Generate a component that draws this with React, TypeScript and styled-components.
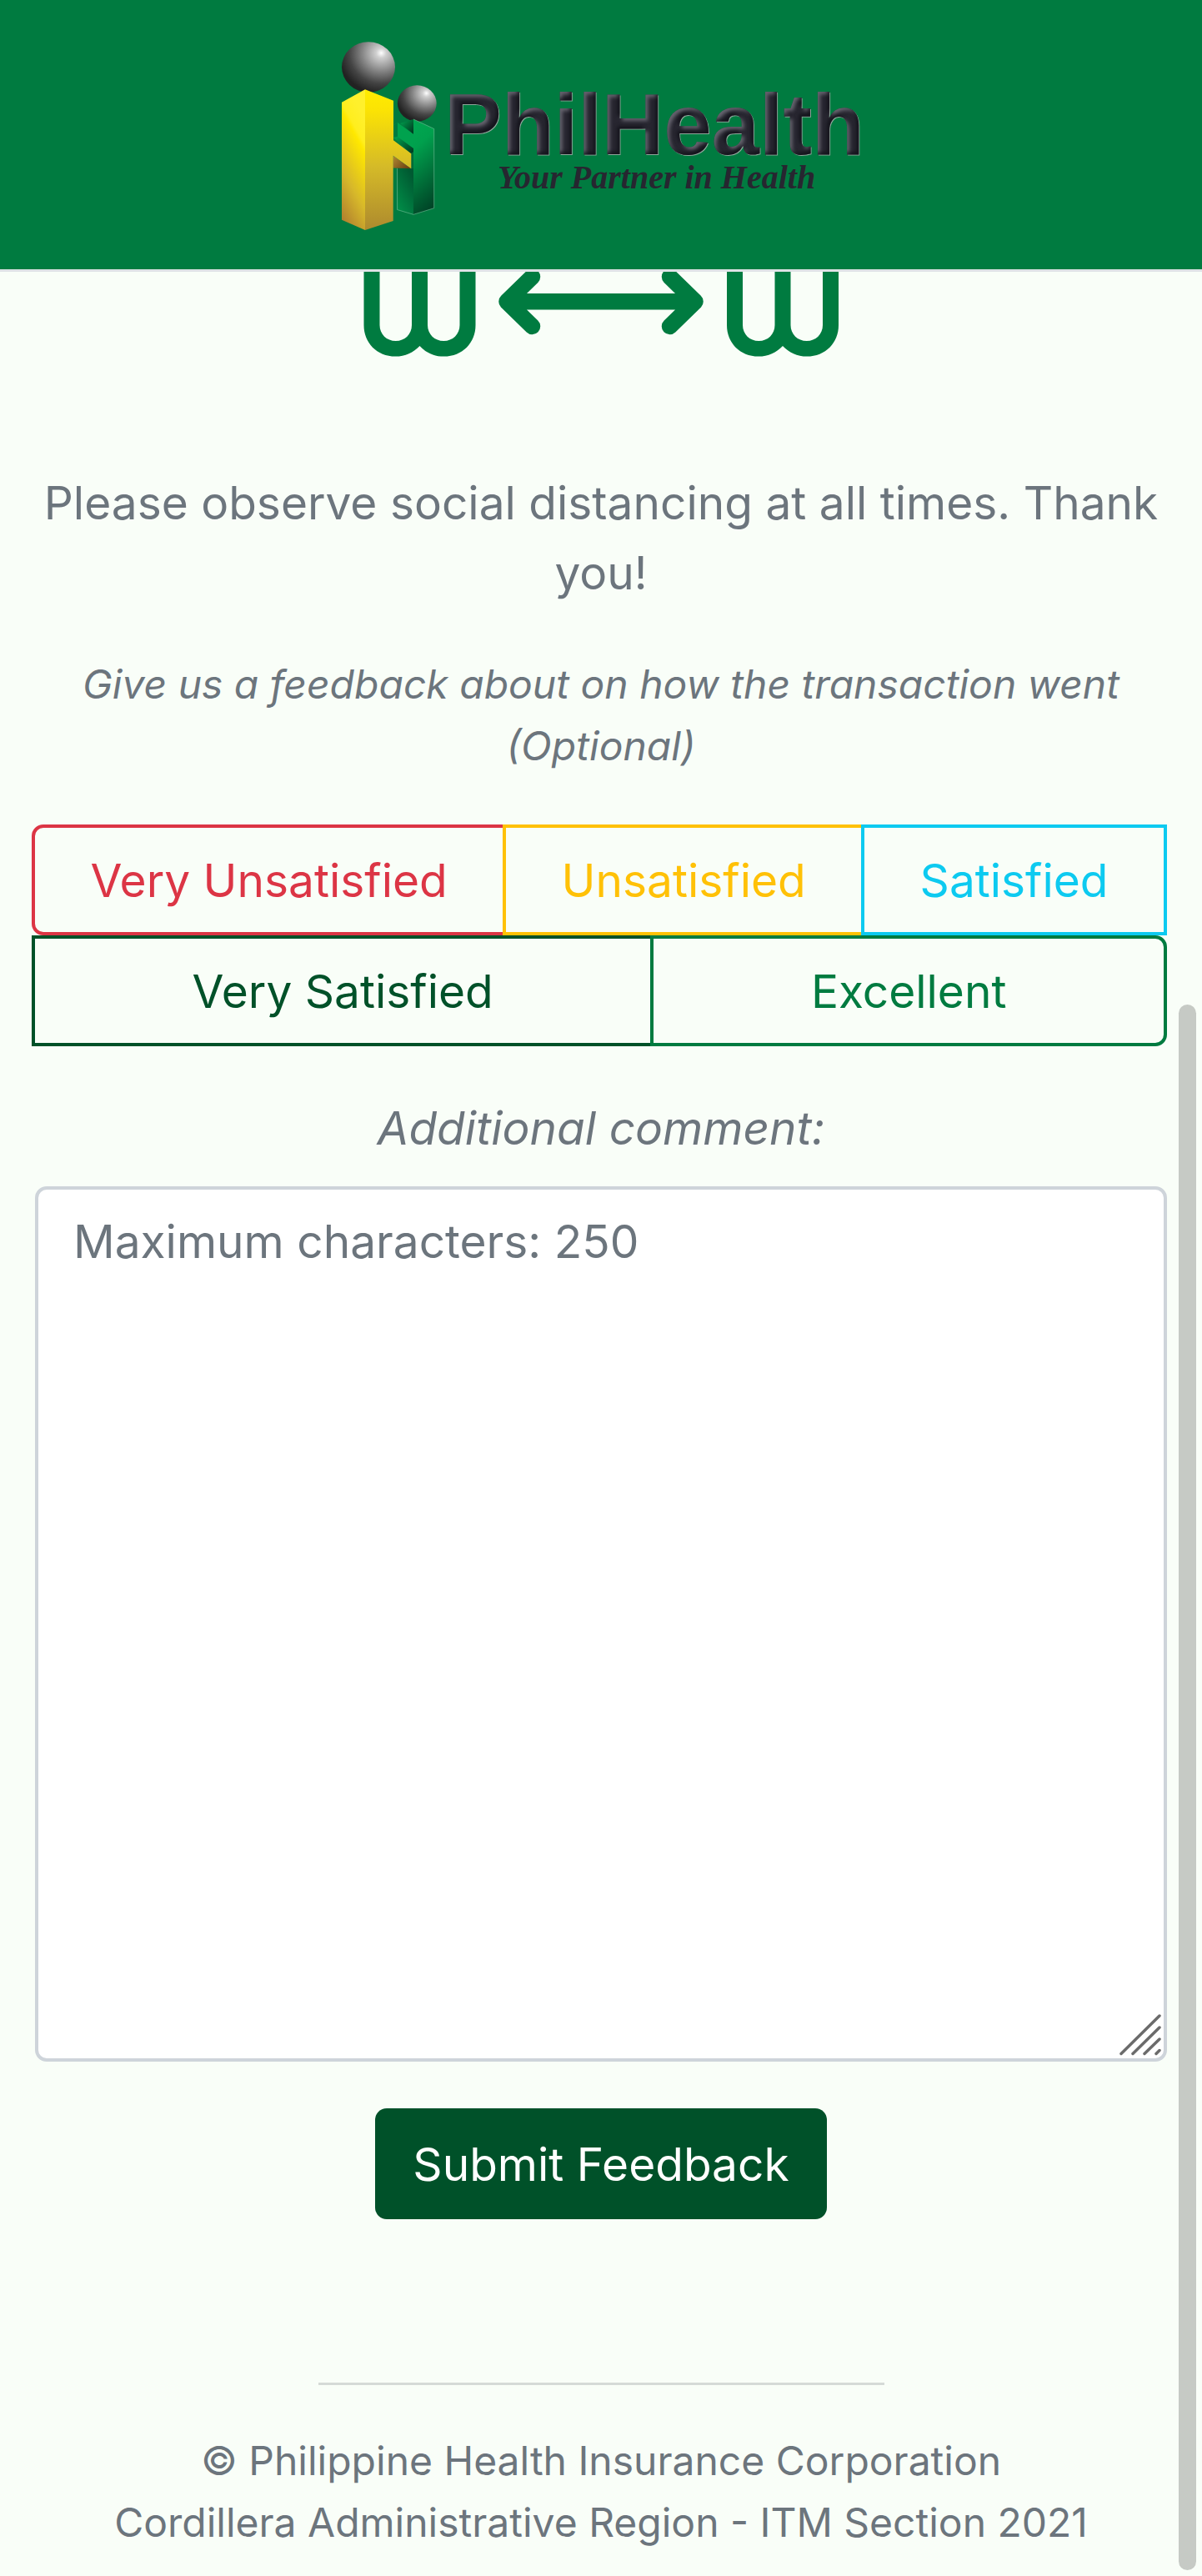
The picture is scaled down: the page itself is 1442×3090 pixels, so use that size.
import React, { useState } from "react";
import styled, { createGlobalStyle } from "styled-components";

const color = {
  brand: "#007b40",
  brandDark: "#005129",
  page: "#f9fef8",
  text: "#6c757d",
  line: "#dee2e6",
  field: "#ced4da",
};

const sans = '"Inter", "Roboto", sans-serif';

const GlobalStyle = createGlobalStyle`
  *, *::before, *::after { box-sizing: border-box; }
  body {
    margin: 0;
    background: ${color.page};
    color: ${color.text};
    font-family: ${sans};
    font-size: 55px;
    line-height: 84px;
  }
`;

const Page = styled.div`
  position: relative;
  display: flex;
  flex-direction: column;
  min-height: 100vh;
  overflow-x: hidden;
`;

const Header = styled.header`
  display: flex;
  justify-content: center;
  padding: 48px 0 45px;
  background: ${color.brand};
  border-bottom: 3px solid ${color.line};
`;

const LogoSvg = styled.svg`
  display: block;
  width: 632px;
  max-width: 100%;
  height: auto;
`;

const LogoName = styled.text`
  font: bold 103px "Liberation Sans", Arial, sans-serif;
`;

const LogoTagline = styled.text`
  font: italic bold 40px "Liberation Serif", "Times New Roman", serif;
`;

const Main = styled.main`
  display: flex;
  flex-direction: column;
  padding: 0 42px;
  text-align: center;
`;

const DistanceSvg = styled.svg`
  display: block;
  align-self: center;
  width: 572px;
  max-width: 100%;
  height: auto;
  margin-bottom: 132px;
`;

const Notice = styled.p`
  margin: 0 -14px 55px;
`;

const Prompt = styled.p`
  margin: 0 0 57px;
  font-size: 48px;
  font-style: italic;
  line-height: 74px;
`;

const RatingGroup = styled.div`
  display: flex;
  flex-wrap: wrap;
  margin-bottom: 56px;
`;

const RatingButton = styled.button<{ $tone: string; $corners?: string }>`
  flex: 1 1 auto;
  height: 133px;
  margin: 0 0 0 -4px;
  padding: 0 42px;
  border: 4px solid ${(p) => p.$tone};
  border-radius: ${(p) => p.$corners ?? "0"};
  background: transparent;
  color: ${(p) => p.$tone};
  font: inherit;
  cursor: pointer;
`;

const CommentLabel = styled.label`
  margin-bottom: 28px;
  font-style: italic;
`;

const CommentField = styled.div`
  position: relative;
  display: flex;
  margin-bottom: 56px;
`;

const CommentBox = styled.textarea`
  flex: 1;
  min-width: 0;
  height: 1050px;
  padding: 20px 42px;
  border: 4px solid ${color.field};
  border-radius: 14px;
  background: #fff;
  color: #212529;
  font: inherit;
  resize: none;

  &::placeholder {
    color: ${color.text};
    opacity: 1;
  }
`;

const Grip = styled.svg`
  position: absolute;
  right: 7px;
  bottom: 7px;
  width: 50px;
  height: 50px;
  pointer-events: none;
`;

const SubmitButton = styled.button`
  align-self: center;
  height: 133px;
  padding: 0 45px;
  border: 0;
  border-radius: 14px;
  background: ${color.brandDark};
  color: #fff;
  font: inherit;
  cursor: pointer;
`;

const Footer = styled.footer`
  display: flex;
  flex-direction: column;
  align-items: center;
  padding: 196px 42px 25px;
  font-size: 48px;
  line-height: 74px;
  text-align: center;
`;

const Rule = styled.hr`
  width: 50%;
  height: 3px;
  margin: 0 0 54px;
  border: 0;
  background: #d5dad7;
`;

const ScrollThumb = styled.div`
  position: absolute;
  top: 39%;
  right: 7px;
  bottom: 7px;
  width: 21px;
  border-radius: 11px;
  background: #c6cac5;
`;

function Logo() {
  return (
    <LogoSvg viewBox="405 48 632 230" role="img" aria-label="PhilHealth, Your Partner in Health">
      <defs>
        <radialGradient id="ball" cx="0.74" cy="0.22" r="0.8">
          <stop offset="0" stopColor="#fff" />
          <stop offset="0.12" stopColor="#cfcfcf" />
          <stop offset="0.45" stopColor="#858585" />
          <stop offset="0.75" stopColor="#444" />
          <stop offset="1" stopColor="#222" />
        </radialGradient>
        <linearGradient id="goldLeft" x1="0.3" y1="0" x2="0" y2="1">
          <stop offset="0" stopColor="#fff02c" />
          <stop offset="0.17" stopColor="#ffee1e" />
          <stop offset="0.22" stopColor="#ffe800" />
          <stop offset="0.6" stopColor="#d7b82a" />
          <stop offset="1" stopColor="#a87430" />
        </linearGradient>
        <linearGradient id="goldRight" x1="0" y1="0" x2="0" y2="1">
          <stop offset="0" stopColor="#ffec00" />
          <stop offset="0.15" stopColor="#fbe304" />
          <stop offset="0.55" stopColor="#d5ba28" />
          <stop offset="1" stopColor="#ad8a2e" />
        </linearGradient>
        <linearGradient id="goldUnder" x1="0" y1="0" x2="1" y2="0.6">
          <stop offset="0" stopColor="#b08a34" />
          <stop offset="1" stopColor="#6e4314" />
        </linearGradient>
        <linearGradient id="leafRight" x1="0.3" y1="0" x2="0.5" y2="1">
          <stop offset="0" stopColor="#00a650" />
          <stop offset="0.25" stopColor="#00a04d" />
          <stop offset="1" stopColor="#004527" />
        </linearGradient>
        <linearGradient id="leafLeft" x1="0" y1="1" x2="0.6" y2="0">
          <stop offset="0" stopColor="#00924a" />
          <stop offset="1" stopColor="#005a32" />
        </linearGradient>
        <linearGradient id="leafFold" x1="0" y1="0" x2="1" y2="1">
          <stop offset="0" stopColor="#00a650" />
          <stop offset="0.9" stopColor="#003d22" />
        </linearGradient>
        <filter id="bevel" x="-5%" y="-10%" width="110%" height="120%" colorInterpolationFilters="sRGB">
          <feGaussianBlur in="SourceAlpha" stdDeviation="2" result="soft" />
          <feOffset in="soft" dx="3" dy="3" result="lowerRight" />
          <feComposite in="SourceAlpha" in2="lowerRight" operator="out" result="litEdge" />
          <feFlood floodColor="#9a98a4" floodOpacity="0.55" />
          <feComposite in2="litEdge" operator="in" result="light" />
          <feOffset in="soft" dx="-3" dy="-3" result="upperLeft" />
          <feComposite in="SourceAlpha" in2="upperLeft" operator="out" result="darkEdge" />
          <feFlood floodColor="#0c0b12" floodOpacity="0.7" />
          <feComposite in2="darkEdge" operator="in" result="dark" />
          <feOffset in="SourceAlpha" dx="0.6" dy="0.8" result="rimShape" />
          <feFlood floodColor="#8fa79b" />
          <feComposite in2="rimShape" operator="in" result="rim" />
          <feMerge>
            <feMergeNode in="rim" />
            <feMergeNode in="SourceGraphic" />
            <feMergeNode in="light" />
            <feMergeNode in="dark" />
          </feMerge>
        </filter>
      </defs>

      <ellipse cx="442" cy="80.5" rx="32" ry="30.3" fill="url(#ball)" />
      <ellipse cx="500.3" cy="124" rx="23.4" ry="21.7" fill="url(#ball)" />

      <path d="M476.5 200H496V257.3L476.5 251.5Z" fill="url(#leafLeft)" />
      <path d="M496 143L520.7 154.5V249.7L496 257.3Z" fill="url(#leafRight)" />
      <path d="M480 148L496 143V161Z" fill="url(#leafFold)" />
      <path d="M472 150L477 147L496 161V179L472 165Z" fill="#00a24e" />
      <path d="M472 150L477 147V164L472 166Z" fill="#007c40" />
      <path d="M472 165L477 164L496 178V186L493 184.5Z" fill="url(#leafFold)" />
      <path d="M493 184L496 182V202H493Z" fill="#006b38" />
      <path
        d="M476.5 202V251.5L496 257.3L520.7 249.7V154.5L496 143"
        fill="none"
        stroke="#7fc4a0"
        strokeWidth="0.7"
        strokeOpacity="0.8"
      />

      <path d="M410 122.7L438 107.3V276L410 263.7Z" fill="url(#goldLeft)" />
      <path d="M471.5 186.7L493.3 202.3L471.5 201.6Z" fill="url(#goldUnder)" />
      <path
        d="M438 107.3L472 120.7V168.3L493.3 184.3V202.3L471.7 186.7V265L438 276Z"
        fill="url(#goldRight)"
      />

      <LogoName x="533" y="184.5" fill="#272630" filter="url(#bevel)">
        PhilHealth
      </LogoName>
      <LogoTagline x="597" y="225.5" fill="#272630">
        Your Partner in Health
      </LogoTagline>
    </LogoSvg>
  );
}

function Legs() {
  return (
    <path
      d="M436.5 326V390C436.5 411 452 427.6 474.5 427.6C486 427.6 496 423 503.5 415C511 423 521 427.6 532.5 427.6C555 427.6 570.5 411 570.5 390V326H551.5V390C551.5 401 543 409 532.3 409C521.5 409 513 401 513 390V326H494V390C494 401 485.5 409 474.8 409C464 409 455.5 401 455.5 390V326Z"
      fill={color.brand}
    />
  );
}

function DistanceIcon() {
  return (
    <DistanceSvg viewBox="435 326 572 103" role="img" aria-label="Keep your distance">
      <Legs />
      <g transform="translate(435.5 0)">
        <Legs />
      </g>
      <path
        d="M638.5 332L608 361.8L638.5 391.5M803.5 332L834 361.8L803.5 391.5M608 361.8H834"
        fill="none"
        stroke={color.brand}
        strokeWidth="19.5"
        strokeLinecap="round"
        strokeLinejoin="round"
      />
    </DistanceSvg>
  );
}

const ratings = [
  { label: "Very Unsatisfied", tone: "#dc3545", corners: "14px 0 0 14px" },
  { label: "Unsatisfied", tone: "#ffc107" },
  { label: "Satisfied", tone: "#0dcaf0" },
  { label: "Very Satisfied", tone: color.brandDark },
  { label: "Excellent", tone: color.brand, corners: "0 14px 14px 0" },
];

export default function App() {
  const [comment, setComment] = useState("");

  return (
    <Page>
      <GlobalStyle />
      <Header>
        <Logo />
      </Header>
      <Main>
        <DistanceIcon />
        <Notice>Please observe social distancing at all times. Thank you!</Notice>
        <Prompt>Give us a feedback about on how the transaction went (Optional)</Prompt>
        <RatingGroup role="group" aria-label="Rating">
          {ratings.map((r) => (
            <RatingButton key={r.label} type="button" $tone={r.tone} $corners={r.corners}>
              {r.label}
            </RatingButton>
          ))}
        </RatingGroup>
        <CommentLabel htmlFor="comment">Additional comment:</CommentLabel>
        <CommentField>
          <CommentBox
            id="comment"
            maxLength={250}
            placeholder="Maximum characters: 250"
            value={comment}
            onChange={(e) => setComment(e.target.value)}
          />
          <Grip viewBox="0 0 50 50" aria-hidden="true">
            <path
              d="M2 47.5L48 2M16 47.5L48 16M30 47.5L48 30M44 47.5L48 43.5"
              stroke="#6b6b6b"
              strokeWidth="3.5"
              strokeLinecap="round"
            />
          </Grip>
        </CommentField>
        <SubmitButton type="submit">Submit Feedback</SubmitButton>
      </Main>
      <Footer>
        <Rule />
        <span>© Philippine Health Insurance Corporation</span>
        <span>Cordillera Administrative Region - ITM Section 2021</span>
      </Footer>
      <ScrollThumb />
    </Page>
  );
}
